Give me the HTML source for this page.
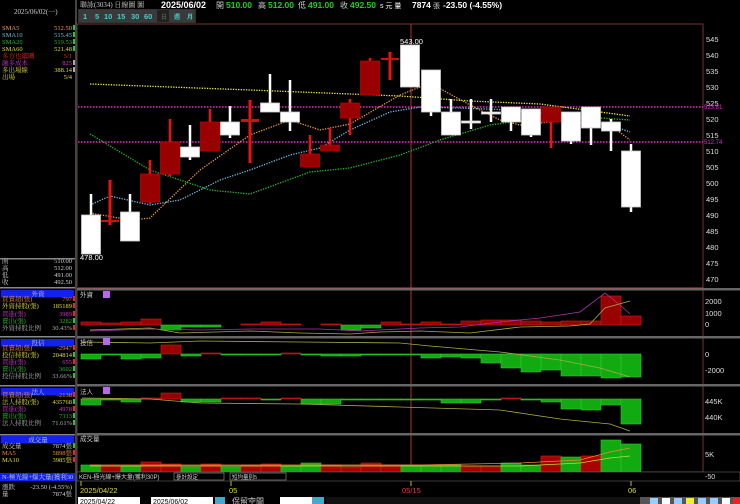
<!DOCTYPE html>
<html><head><meta charset="utf-8"><style>
html,body{margin:0;padding:0;background:#000;width:740px;height:504px;overflow:hidden}
svg{display:block;font-family:"Liberation Sans","Noto Sans CJK TC",sans-serif}
.s{font-family:"Liberation Serif","Noto Serif CJK SC",serif}
</style></head><body>
<svg id="g" width="740" height="504" xmlns="http://www.w3.org/2000/svg">
<rect width="740" height="504" fill="#000"/>
<text x="14" y="14" font-size="7" fill="#ccc" class="s">2025/06/02(一)</text>
<text x="80" y="7" font-size="7" fill="#ccc" class="s">聯詠(3034)   日線圖  圖</text>
<text x="161" y="8" font-size="9" font-weight="bold" fill="#fff">2025/06/02</text>
<text x="216" y="8" font-size="8" fill="#ccc">開</text><text x="226" y="8" font-size="8.5" font-weight="bold" fill="#2c2">510.00</text>
<text x="258" y="8" font-size="8" fill="#ccc">高</text><text x="268" y="8" font-size="8.5" font-weight="bold" fill="#2c2">512.00</text>
<text x="298" y="8" font-size="8" fill="#ccc">低</text><text x="308" y="8" font-size="8.5" font-weight="bold" fill="#2c2">491.00</text>
<text x="340" y="8" font-size="8" fill="#ccc">收</text><text x="350" y="8" font-size="8.5" font-weight="bold" fill="#2c2">492.50</text>
<text x="380" y="8" font-size="7" fill="#fff">s 元  量</text><text x="412" y="8" font-size="8.5" font-weight="bold" fill="#fff">7874</text>
<text x="433" y="8" font-size="7" fill="#ccc">張</text><text x="443" y="8" font-size="8.5" font-weight="bold" fill="#fff">-23.50 (-4.55%)</text>
<rect x="78" y="9" width="118" height="14" fill="#333"/>
<g font-size="7.5" font-weight="bold" fill="#4cc">
<rect x="79" y="10" width="115" height="12" fill="#3a3a3a"/>
<text x="83" y="19">1</text><text x="95" y="19">5</text><text x="104" y="19">10</text><text x="117" y="19">15</text><text x="131" y="19">30</text><text x="144" y="19">60</text>
<rect x="157" y="10" width="12" height="12" fill="#222"/><text x="161" y="19" fill="#555" font-size="6">日</text>
<text x="174" y="19" font-size="6">週</text><text x="187" y="19" font-size="6">月</text></g>
<rect x="77" y="24" width="626" height="448" fill="none" stroke="#733" stroke-width="1"/>
<line x1="76" y1="0" x2="76" y2="504" stroke="#444" stroke-width="2"/>
<line x1="411" y1="24" x2="411" y2="480" stroke="#a33" stroke-width="1"/>
<g id="main"></g>
<g font-size="6.5" class="s" id="left"></g>
</svg>
<script>
const NS="http://www.w3.org/2000/svg",G=document.getElementById('main'),L=document.getElementById('left');
function el(p,t,a,txt){const e=document.createElementNS(NS,t);for(const k in a)e.setAttribute(k,a[k]);if(txt!=null)e.textContent=txt;p.appendChild(e);return e}
for(let p=545;p>=470;p-=5){const y=39+(545-p)*3.2;el(G,'text',{x:706,y:y+3,'font-size':7.5,fill:'#ddd'},p)}
[107,142].forEach(y=>el(G,'line',{x1:78,x2:703,y1:y,y2:y,stroke:'#e2c',"stroke-width":1.5,"stroke-dasharray":"1.5,1.5"}));
el(G,'text',{x:704,y:109,'font-size':6,fill:'#e2c'},'523.81');el(G,'text',{x:704,y:144,'font-size':6,fill:'#e2c'},'512.74');
const ma=[['#ee3',[[90,84],[250,90],[400,96],[470,101],[540,104],[630,116]]],
['#e93',[[90,213],[130,220],[150,218],[200,170],[250,135],[290,120],[320,130],[350,124],[400,95],[430,83],[470,105],[500,120],[520,125],[560,121],[610,125],[630,140]]],
['#6bd',[[90,205],[110,196],[150,205],[180,200],[220,180],[250,170],[290,155],[320,148],[350,130],[390,112],[420,107],[460,108],[510,110],[560,115],[610,125],[630,132]]],
['#2b2',[[90,134],[150,170],[210,190],[250,194],[310,172],[350,168],[400,155],[440,140],[490,125],[540,118],[600,118],[630,120]]]];
ma.forEach(([c,pts])=>el(G,'polyline',{points:pts.join(' '),fill:'none',stroke:c,'stroke-width':1.3,'stroke-dasharray':'1.3,1.3'}));
const C=[[91,215,254,194,254,'w'],[110,220,222,180,225,'c'],[130,212,241,194,241,'w'],[150,174,202,160,204,'r'],[170,142,174,119,176,'r'],[190,147,157,125,160,'w'],[210,122,151,109,151,'r'],[230,122,135,106,138,'w'],[250,119,122,100,163,'c'],[270,103,112,74,112,'w'],[290,112,122,80,131,'w'],[310,154,167,135,167,'r'],[330,145,151,128,151,'r'],[350,103,118,99,135,'r'],[370,61,95,58,95,'r'],[390,58,60,52,80,'c'],[410,45,87,45,87,'w'],[431,70,112,70,116,'w'],[451,112,135,99,135,'w'],[471,121,122,99,129,'w'],[491,112,112,99,122,'w'],[511,107,122,107,131,'w'],[531,109,135,109,137,'w'],[551,107,122,107,148,'r'],[571,112,141,112,144,'w'],[591,107,128,107,145,'w'],[611,122,131,119,151,'w'],[631,151,207,144,212,'w']];
C.forEach(([x,bt,bb,wt,wb,t])=>{
 if(t=='c'){el(G,'line',{x1:x,x2:x,y1:wt,y2:wb,stroke:'#e11','stroke-width':3});el(G,'rect',{x:x-9,y:bt,width:18,height:Math.max(2,bb-bt),fill:'#c11'});return}
 const wc=t=='w'?'#fff':'#e11';el(G,'line',{x1:x,x2:x,y1:wt,y2:wb,stroke:wc,'stroke-width':2.5});
 el(G,'rect',{x:x-9.5,y:bt,width:19,height:Math.max(2,bb-bt),fill:t=='w'?'#fff':'#900',stroke:t=='w'?'#ccc':'#b00','stroke-width':0.8});});
el(G,'text',{x:80,y:260,'font-size':7.5,fill:'#fff'},'478.00');el(G,'text',{x:400,y:44,'font-size':7.5,fill:'#fff'},'543.00');
[289,337,385,434].forEach(y=>el(G,'rect',{x:77,y:y-1,width:663,height:2.5,fill:'#666'}));
el(G,'line',{x1:78,x2:703,y1:288,y2:288,stroke:'#a55','stroke-width':1});
function bars(zero,vals,labelY,name,lineA,lineB){
 vals.forEach((v,i)=>{const x=81+i*20;if(!v)return;el(G,'rect',{x:x,y:v<0?zero+v:zero,width:20,height:Math.abs(v),fill:v<0?'#900':'#1a1',stroke:v<0?'#c22':'#3c3','stroke-width':0.6})});
 el(G,'text',{x:80,y:labelY,'font-size':6.5,fill:'#ccc'},name);
 if(lineA)el(G,'polyline',{points:lineA.join(' '),fill:'none',stroke:'#aa4','stroke-width':0.8});
 if(lineB)el(G,'polyline',{points:lineB.join(' '),fill:'none',stroke:'#a3a','stroke-width':0.8});
}
bars(325,[-3,-2,-3,-6,5,2,2,0,-1,-3,-1,0,-1,5,3,-3,-1,-3,-1,-4,-5,-5,-4,-3,-4,-4,-29,-9],297,'外資',
 [[90,330],[150,328],[180,333],[250,331],[300,333],[350,334],[380,332],[420,331],[470,333],[520,327],[570,326],[590,324],[605,308],[630,301]],
 [[90,331],[150,329],[200,330],[250,329],[320,329],[360,331],[420,328],[460,327],[500,322],[540,318],[580,312],[605,293],[620,305],[630,314]]);
bars(354,[5,1,5,4,-9,2,-1,1,1,1,-1,1,2,2,1,1,1,4,3,4,9,14,18,16,22,22,24,23],345,'投信',
 [[82,342],[150,343],[200,341],[300,342],[400,343],[430,346],[500,352],[560,360],[600,368],[630,377]]);
bars(399,[6,1,3,-1,-6,3,3,-1,-1,1,-1,5,5,1,1,1,1,1,4,4,1,-1,1,3,10,11,6,25],394,'法人',
 [[82,398],[150,399],[200,403],[300,404],[400,407],[500,410],[560,419],[610,424],[630,431]]);
el(G,'text',{x:80,y:441,'font-size':6.5,fill:'#ccc'},'成交量');
[297,344,393].forEach(y=>el(G,'rect',{x:103,y:y-6,width:7,height:7,fill:'#b6e'}));
const V=[[465,'g'],[466,'r'],[466,'g'],[462,'r'],[464,'r'],[467,'g'],[464,'r'],[467,'g'],[465,'r'],[464,'r'],[466,'g'],[463,'g'],[465,'r'],[467,'r'],[463,'r'],[465,'r'],[465,'g'],[465,'g'],[465,'g'],[466,'r'],[466,'r'],[463,'g'],[465,'g'],[456,'r'],[457,'g'],[456,'r'],[440,'g'],[444,'g']];
V.forEach(([t,c],i)=>el(G,'rect',{x:81+i*20,y:t,width:20,height:472-t,fill:c=='g'?'#1a1':'#a00',stroke:c=='g'?'#3c3':'#d22','stroke-width':0.6}));
el(G,'polyline',{points:'90,465 300,465 420,465 520,463 580,460 610,452 630,448',fill:'none',stroke:'#e83','stroke-width':0.8});
el(G,'polyline',{points:'90,466 300,466 420,466 520,466 580,463 610,458 630,456',fill:'none',stroke:'#bd3','stroke-width':0.8});
[['2000',304],['1000',316],['0',327],['0',357],['-2000',373],['445K',404],['440K',420],['5K',457]].forEach(([t,y])=>el(G,'text',{x:705,y:y,'font-size':7.5,fill:'#ddd'},t));
el(G,'rect',{x:77,y:472,width:663,height:9,fill:'#000',stroke:'#666','stroke-width':0.6});
el(G,'text',{x:79,y:479,'font-size':6,fill:'#ccc'},'KEN-極光線+爆大量(獲利30P)');
el(G,'rect',{x:174,y:473,width:50,height:7,fill:'#000',stroke:'#999','stroke-width':0.6});el(G,'text',{x:176,y:479,'font-size':5.5,fill:'#ccc'},'參計設定');
el(G,'rect',{x:230,y:473,width:56,height:7,fill:'#000',stroke:'#999','stroke-width':0.6});el(G,'text',{x:232,y:479,'font-size':5.5,fill:'#ccc'},'短均量別5');
el(G,'text',{x:705,y:479,'font-size':7,fill:'#ddd'},'-50');
[[80,'2025/04/22','#dd3'],[229,'05','#dd3'],[402,'05/15','#d44'],[628,'06','#dd3']].forEach(([x,t,c])=>el(G,'text',{x:x,y:493,'font-size':7.5,fill:c},t));
[81,231,411,631].forEach(x=>el(G,'line',{x1:x,x2:x,y1:481,y2:486,stroke:'#bb3'}));
el(G,'rect',{x:78,y:497,width:62,height:9,fill:'#fff'});el(G,'text',{x:80,y:504,'font-size':7,fill:'#000'},'2025/04/22');
el(G,'rect',{x:151,y:497,width:62,height:9,fill:'#fff'});el(G,'text',{x:153,y:504,'font-size':7,fill:'#000'},'2025/06/02');
el(G,'rect',{x:215,y:497,width:10,height:9,fill:'#4ac'});
el(G,'text',{x:232,y:504,'font-size':8,fill:'#ccc'},'保留空間');el(G,'rect',{x:280,y:497,width:32,height:9,fill:'#fff'});
el(G,'rect',{x:312,y:497,width:12,height:9,fill:'#4ac'});el(G,'rect',{x:326,y:497,width:414,height:9,fill:'#111'});
el(G,'rect',{x:640,y:497,width:100,height:9,fill:'#555'});
[[650,'#9cf'],[662,'#fff'],[674,'#9cf'],[686,'#ee3'],[698,'#9cf'],[710,'#9cf'],[722,'#fff'],[733,'#e22']].forEach(([x,c])=>el(G,'rect',{x:x,y:498,width:8,height:6,fill:c}));
function lt(x,y,t,c,a){el(L,'text',{x:x,y:y,fill:c,'text-anchor':a||'start'},t)}
function row(y,k,kc,v,vc,mk){lt(2,y,k,kc);lt(72,y,v,vc,'end');if(mk)el(L,'rect',{x:73,y:y-5,width:2,height:5,fill:mk})}
[[30,'SMA5','#e95','512.50','#e95','#2c2'],[37,'SMA10','#6bd','515.45','#6bd','#2c2'],[44,'SMA20','#2b2','519.53','#2b2','#2c2'],[51,'SMA60','#dd3','521.48','#dd3','#2c2'],[58,'多方也續圖','#e22','5/1','#e22',''],[65,'融多成本','#c3c','825','#c3c','#aaa'],[72,'多出場線','#dd3','388.14','#dd3','#aaa'],[79,'出場','#dd3','5/4','#dd3','']].forEach(r=>row(...r));
[[263,'開','510.00'],[270,'高','512.00'],[277,'低','491.00'],[284,'收','492.50']].forEach(([y,k,v])=>row(y,k,'#ccc',v,'#ccc'));
function hdr(y,t){el(L,'rect',{x:1,y:y,width:73,height:7.5,fill:'#12e'});lt(38,y+6,t,'#ccc','middle')}
hdr(290,'外資');hdr(339,'投信');hdr(388,'法人');hdr(436,'成交量');
[[301,'買賣超(張)','#e83','797','#e83','#e22'],[308,'外資持股(張)','#dd3','185189','#dd3','#e22'],[316,'買進(張)','#c3c','3989','#c3c','#e22'],[323,'賣出(張)','#2b2','3282','#2b2','#2c2'],[330,'外資持股比例','#aaa','30.43%','#aaa','#e22'],
[350,'買賣超(張)','#e83','-2947','#e83','#e22'],[357,'投信持股(張)','#dd3','204814','#dd3','#2c2'],[364,'買進(張)','#c3c','655','#c3c','#e22'],[371,'賣出(張)','#2b2','3602','#2b2','#2c2'],[378,'投信持股比例','#aaa','33.66%','#aaa','#2c2'],
[397,'買賣超(張)','#e83','-2138','#e83','#e22'],[404,'法人持股(張)','#dd3','435768','#dd3','#2c2'],[411,'買進(張)','#c3c','4978','#c3c','#e22'],[418,'賣出(張)','#2b2','7113','#2b2','#2c2'],[425,'法人持股比例','#aaa','71.61%','#aaa','#2c2'],
[448,'成交量','#ccc','7874張','#ccc','#2c2'],[455,'MA5','#e83','5898張','#e83','#e22'],[462,'MA10','#dd3','3985張','#dd3','#e22']].forEach(r=>row(...r));
[258,287,336,385,434].forEach(y=>el(L,'rect',{x:0,y:y,width:75,height:1.5,fill:'#888'}));
el(L,'rect',{x:0,y:473,width:75,height:8,fill:'#12e'});lt(2,479,'N-極光線+爆大量(獲利30','#ccc');
row(489,'漲跌','#ccc','-23.50 (-4.55%)','#ccc');row(496,'量','#ccc','7874張','#ccc');
</script>
</body></html>
